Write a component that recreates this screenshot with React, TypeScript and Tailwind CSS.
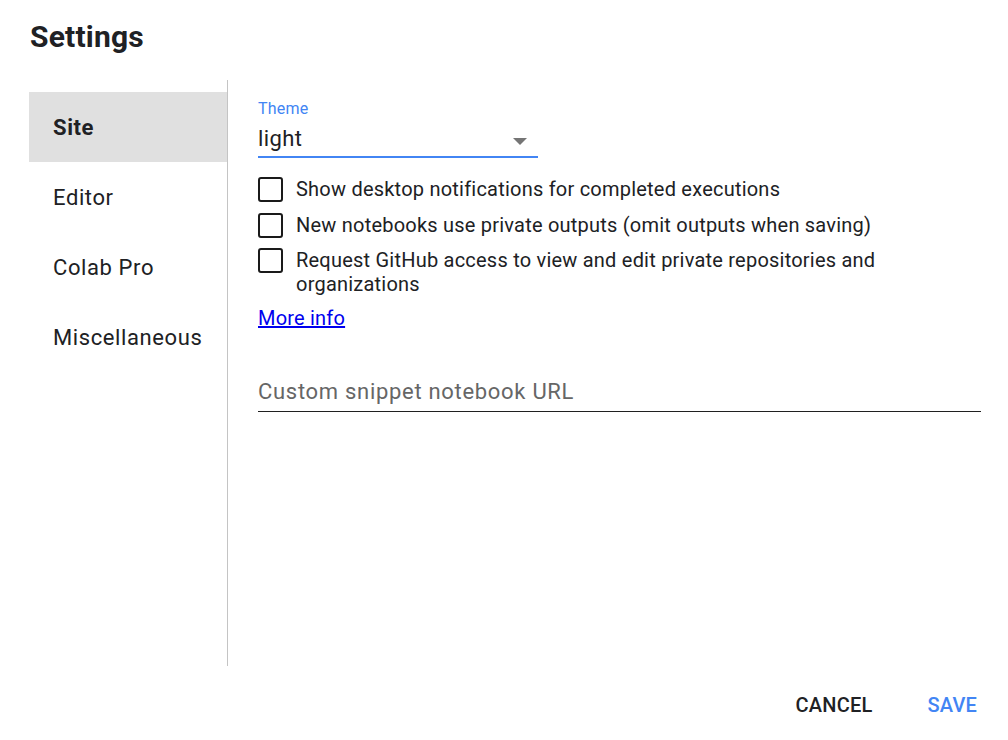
import React from "react";

const items = ["Site", "Editor", "Colab Pro", "Miscellaneous"];

function Box() {
  return <div className="w-[25px] h-[25px] shrink-0 border-2 border-[#1a1a1a] rounded-[3px] bg-white" />;
}

export default function App() {
  return (
    <div
      className="w-[1008px] h-[740px] flex flex-col bg-white text-[#202124]"
      style={{ fontFamily: "Roboto, 'Noto Sans', sans-serif" }}
    >
      <div className="h-[80px] pl-[30px] pt-[19px]">
        <h1 className="text-[30px] leading-[36px] font-bold tracking-[0.2px] text-[#202124]">Settings</h1>
      </div>
      <div className="flex h-[586px]">
        <div className="ml-[29px] w-[198px] pt-[12px] flex flex-col">
          {items.map((it, i) => (
            <div
              key={it}
              className={
                i === 0
                  ? "h-[70px] flex items-center pl-[24px] text-[22px] tracking-[0.6px] font-bold bg-[#e0e0e0]"
                  : "h-[70px] flex items-center pl-[24px] text-[22px] tracking-[0.6px]"
              }
            >
              {it}
            </div>
          ))}
        </div>
        <div className="w-px bg-[#c4c4c4]" />
        <div className="flex-1 pl-[30px] pr-[27px] pt-[19px] flex flex-col">
          <div className="text-[16px] leading-[20px] tracking-[0.2px] text-[#4285f4]">Theme</div>
          <div className="mt-[4px] w-[280px] h-[35px] border-b-2 border-[#4285f4] flex justify-between items-start">
            <span className="text-[22px] leading-[28px] pt-[2px] tracking-[0.4px]">light</span>
            <svg width="14" height="7" viewBox="0 0 14 7" className="mt-[15px] mr-[11px]">
              <path d="M0 0 L14 0 L7 7 Z" fill="#757575" />
            </svg>
          </div>
          <div className="mt-[19px] flex flex-col gap-[10.5px]">
            <div className="flex items-start gap-[13px]">
              <Box />
              <span className="text-[20px] leading-[24px] tracking-[0.22px]">Show desktop notifications for completed executions</span>
            </div>
            <div className="flex items-start gap-[13px]">
              <Box />
              <span className="text-[20px] leading-[24px] tracking-[0.22px]">New notebooks use private outputs (omit outputs when saving)</span>
            </div>
            <div className="flex items-start gap-[13px]">
              <Box />
              <span className="text-[20px] leading-[24px] tracking-[0.22px] w-[600px]">
                Request GitHub access to view and edit private repositories and organizations
              </span>
            </div>
          </div>
          <div className="mt-[10px]">
            <a href="#" className="text-[20px] leading-[24px] tracking-[0.2px] text-[#0000ee] underline">More info</a>
          </div>
          <div className="mt-[46px] h-[34px] border-b border-[#202020]">
            <span className="text-[22px] leading-[28px] tracking-[0.7px] text-[#666666]">Custom snippet notebook URL</span>
          </div>
        </div>
      </div>
      <div className="flex-1 flex items-center justify-end pr-[31px] pt-[4px] gap-[55px]">
        <span className="text-[20px] font-medium tracking-[0.2px] text-[#202124]">CANCEL</span>
        <span className="text-[20px] font-medium tracking-[0.2px] text-[#4285f4]">SAVE</span>
      </div>
    </div>
  );
}
